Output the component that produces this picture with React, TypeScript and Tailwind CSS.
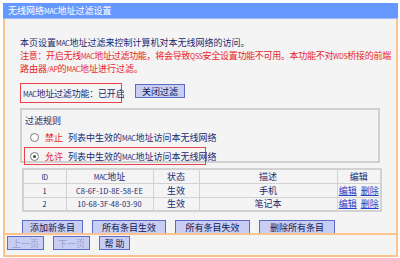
import React from 'react';

const font = { fontFamily: '"Noto Sans CJK SC", "Noto Sans", sans-serif' };

type Row = { id: string; mac: string; status: string; desc: string };

const rows: Row[] = [
  { id: '1', mac: 'C8-6F-1D-8E-58-EE', status: '生效', desc: '手机' },
  { id: '2', mac: '10-68-3F-48-03-90', status: '生效', desc: '笔记本' },
];

// latin runs in the original are half-width bitmap glyphs, so shrink them a bit
function L({ children }: { children: React.ReactNode }) {
  return <span className="text-[7px] leading-none tracking-[-0.3px]">{children}</span>;
}

function Btn({ label, w, disabled }: { label: string; w: string; disabled?: boolean }) {
  return (
    <button
      className={`${w} flex h-[14px] shrink-0 items-center justify-center whitespace-nowrap border border-[#5c6cc4] bg-[#c8cdf4] text-[9px] leading-none ${
        disabled ? 'text-[#9aa0c8]' : 'text-[#101850]'
      }`}
    >
      {label}
    </button>
  );
}

function Radio({ checked }: { checked?: boolean }) {
  return (
    <span className="flex h-[9px] w-[9px] shrink-0 items-center justify-center rounded-full border border-[#7a7a7a] bg-white">
      {checked && <span className="h-[3px] w-[3px] rounded-full bg-[#2a5a2a]" />}
    </span>
  );
}

export default function App() {
  const cell = 'border border-[#d2d2d2] h-[14px] p-0 text-center text-[9px] leading-none text-[#1c2a70] whitespace-nowrap';
  const line = 'flex h-[13px] items-center text-[9px] leading-none';

  return (
    <div className="h-[258px] w-[400px] overflow-hidden bg-white pl-[3px] pt-[3px] whitespace-nowrap" style={font}>
      <div className="flex h-[16px] w-[395px] items-center border-b border-[#9cbcff] bg-[#6699ff] pl-[5px] text-[9px] leading-none text-white">
        <span>
          无线网络<L>MAC</L>地址过滤设置
        </span>
      </div>
      <div className="flex h-[238px] w-[395px] flex-col border-x-2 border-b-2 border-[#fcc48c] bg-[#f4f4f4]">
        <div className="h-[216px] shrink-0 overflow-hidden border-b-2 border-[#fcc48c] pl-[15px] pt-[17px]">
          <div className={`${line} text-[#1c2a70]`}>
            <span>
              本页设置<L>MAC</L>地址过滤来控制计算机对本无线网络的访问。
            </span>
          </div>
          <div className={`${line} tracking-[-0.3px] text-[#e8242a]`}>
            <span>
              注意：开启无线<L>MAC</L>地址过滤功能，将会导致<L>QSS</L>安全设置功能不可用。本功能不对<L>WDS</L>桥接的前端
            </span>
          </div>
          <div className={`${line} text-[#e8242a]`}>
            <span>
              路由器<L>/AP</L>的<L>MAC</L>地址进行过滤。
            </span>
          </div>

          <div className="mt-[8px] flex items-start">
            <div className="flex h-[20px] w-[102px] items-center border border-[#e8424a] pl-[2px] text-[9px] leading-none tracking-[-0.2px] text-[#1c2a70]">
              <span>
                <L>MAC</L>地址过滤功能：已开启
              </span>
            </div>
            <div className="ml-[13px] mt-[1px]">
              <Btn label="关闭过滤" w="w-[50px]" />
            </div>
          </div>

          <div className="mt-[5px] h-[55px] w-[360px] border-2 border-[#d0d0d0] pl-[3px] pt-[4px] text-[9px] leading-none text-[#1c2a70]">
            <div className="flex h-[12px] items-center">过滤规则</div>
            <div className="mt-[4px] flex h-[14px] items-center pl-[5px]">
              <Radio />
              <span className="ml-[6px] text-[#e8242a]">禁止</span>
              <span className="ml-[5px]">
                列表中生效的<L>MAC</L>地址访问本无线网络
              </span>
            </div>
            <div className="-ml-[1px] mt-[3px] flex h-[18px] w-[182px] items-center border border-[#e8424a] pl-[5px]">
              <Radio checked />
              <span className="ml-[6px] text-[#e8242a]">允许</span>
              <span className="ml-[5px]">
                列表中生效的<L>MAC</L>地址访问本无线网络
              </span>
            </div>
          </div>

          <table className="ml-[2px] mt-[5px] w-[358px] table-fixed border-collapse border-2 border-[#d2d2d2]">
            <colgroup>
              <col className="w-[43px]" />
              <col className="w-[87px]" />
              <col className="w-[46px]" />
              <col className="w-[138px]" />
              <col className="w-[44px]" />
            </colgroup>
            <thead>
              <tr className="h-[14px]">
                <th className={`${cell} font-normal`}>
                  <L>ID</L>
                </th>
                <th className={`${cell} font-normal`}>
                  <L>MAC</L>地址
                </th>
                <th className={`${cell} font-normal`}>状态</th>
                <th className={`${cell} font-normal`}>描述</th>
                <th className={`${cell} font-normal`}>编辑</th>
              </tr>
            </thead>
            <tbody>
              {rows.map((r) => (
                <tr key={r.id} className="h-[14px]">
                  <td className={cell}>
                    <span className="text-[7.5px] leading-none tracking-[0.1px]">{r.id}</span>
                  </td>
                  <td className={cell}>
                    <span className="text-[7.5px] leading-none tracking-[0.1px]">{r.mac}</span>
                  </td>
                  <td className={cell}>{r.status}</td>
                  <td className={cell}>{r.desc}</td>
                  <td className={cell}>
                    <span className="text-[#2440c8] underline">编辑</span>
                    <span className="ml-[4px] text-[#2440c8] underline">删除</span>
                  </td>
                </tr>
              ))}
            </tbody>
          </table>

          <div className="ml-[2px] mt-[8px] flex gap-[9px]">
            <Btn label="添加新条目" w="w-[61px]" />
            <Btn label="所有条目生效" w="w-[74px]" />
            <Btn label="所有条目失效" w="w-[75px]" />
            <Btn label="删除所有条目" w="w-[76px]" />
          </div>
        </div>
        <div className="flex gap-[9px] pl-[2px] pt-[1px]">
          <Btn label="上一页" w="w-[37px]" disabled />
          <Btn label="下一页" w="w-[37px]" disabled />
          <Btn label="帮 助" w="w-[31px]" />
        </div>
      </div>
    </div>
  );
}
